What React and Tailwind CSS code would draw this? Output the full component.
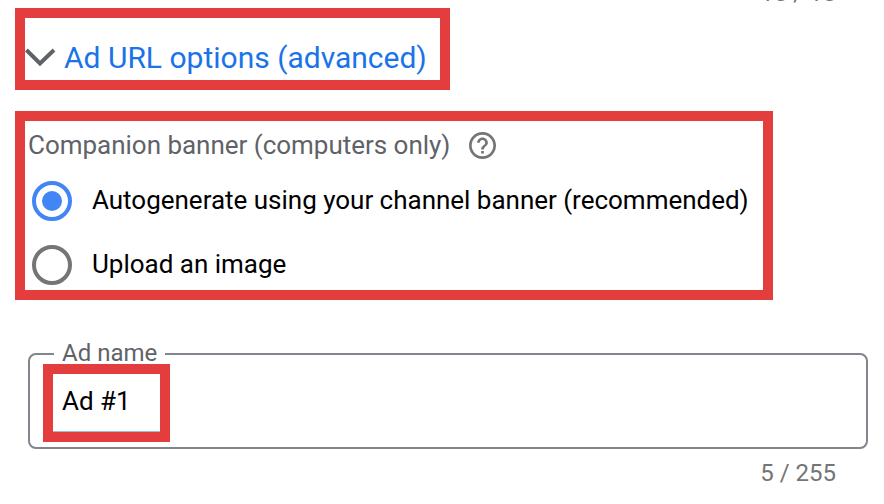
import { useState } from 'react';
import clsx from 'clsx';

const BANNER_OPTIONS = [
  { id: 'auto', label: 'Autogenerate using your channel banner (recommended)' },
  { id: 'upload', label: 'Upload an image' },
];

function ChevronIcon() {
  return (
    <svg viewBox="0 0 31 19" className="w-[31px] h-[19px] shrink-0" fill="none" stroke="#5f6368" strokeWidth="4">
      <path d="M1.4 2L15 15.4 29 2" />
    </svg>
  );
}

function HelpIcon() {
  return (
    <svg viewBox="2 2 20 20" className="w-[27px] h-[27px] shrink-0 fill-[#757575]">
      <path d="M11 18h2v-2h-2v2zm1-16C6.48 2 2 6.48 2 12s4.48 10 10 10 10-4.48 10-10S17.52 2 12 2zm0 18c-4.41 0-8-3.59-8-8s3.59-8 8-8 8 3.59 8 8-3.59 8-8 8zm0-14c-2.21 0-4 1.79-4 4h2c0-1.1.9-2 2-2s2 .9 2 2c0 2-3 1.75-3 5h2c0-2.25 3-2.5 3-5 0-2.21-1.79-4-4-4z" />
    </svg>
  );
}

function RadioOption({ option, checked, onSelect }) {
  return (
    <button
      type="button"
      role="radio"
      aria-checked={checked}
      onClick={onSelect}
      className="flex items-center gap-5 h-10 text-left"
    >
      <span
        className={clsx(
          'flex items-center justify-center w-10 h-10 shrink-0 rounded-full border-4',
          checked ? 'border-[#4285f4]' : 'border-[#757575]'
        )}
      >
        {checked && <span className="w-5 h-5 rounded-full bg-[#4285f4]" />}
      </span>
      <span className="text-[26px] leading-[38px] pb-0.5 tracking-[-0.015px] text-black">{option.label}</span>
    </button>
  );
}

export default function App() {
  const [banner, setBanner] = useState('auto');

  return (
    <div className="w-[884px] h-[504px] overflow-hidden bg-white font-[Roboto,sans-serif] whitespace-nowrap">
      {/* Counter of the field above */}
      <div className="flex items-end justify-end h-[5px] pr-12 text-[24px] leading-6 text-[#757575]">15 / 15</div>

      {/* URL options */}
      <div className="flex items-center gap-2 w-[435px] h-[82px] mt-[3px] ml-[15px] border-10 border-[#e43d3d] pt-[17px]">
        <ChevronIcon />
        <span className="text-[30px] leading-9 text-[#1a73e8]">Ad URL options (advanced)</span>
      </div>

      {/* Companion banner */}
      <div className="w-[758px] h-[189px] mt-[21px] ml-[15px] border-10 border-[#e43d3d] pt-2">
        <div className="flex items-center gap-[19px] h-8 pl-[3px]">
          <span className="text-[26px] leading-8 tracking-[-0.02px] text-[#5f6368]">
            Companion banner (computers only)
          </span>
          <HelpIcon />
        </div>
        <div role="radiogroup" className="flex flex-col gap-6 pt-5 pl-[7px]">
          {BANNER_OPTIONS.map((option) => (
            <RadioOption
              key={option.id}
              option={option}
              checked={banner === option.id}
              onSelect={() => setBanner(option.id)}
            />
          ))}
        </div>
      </div>

      {/* Ad name */}
      <fieldset className="w-[840px] h-[109px] mt-[40px] ml-7 px-0 border-2 border-[#80868b] rounded-lg">
        <legend className="ml-6 px-2 pb-0.5 text-[24px] leading-[26px] text-[#5f6368]">Ad name</legend>
        <div className="w-[127px] h-[78px] -mt-1 ml-[13px] border-10 border-[#e43d3d]">
          <div className="flex items-center h-full pl-[9px] border-b border-[#8fc3dc]">
            <span className="text-[26px] leading-8 pb-[3px] text-black">Ad #1</span>
          </div>
        </div>
      </fieldset>
      <div className="flex justify-end pr-12 pt-3 text-[24px] leading-6 text-[#757575]">5 / 255</div>
    </div>
  );
}
